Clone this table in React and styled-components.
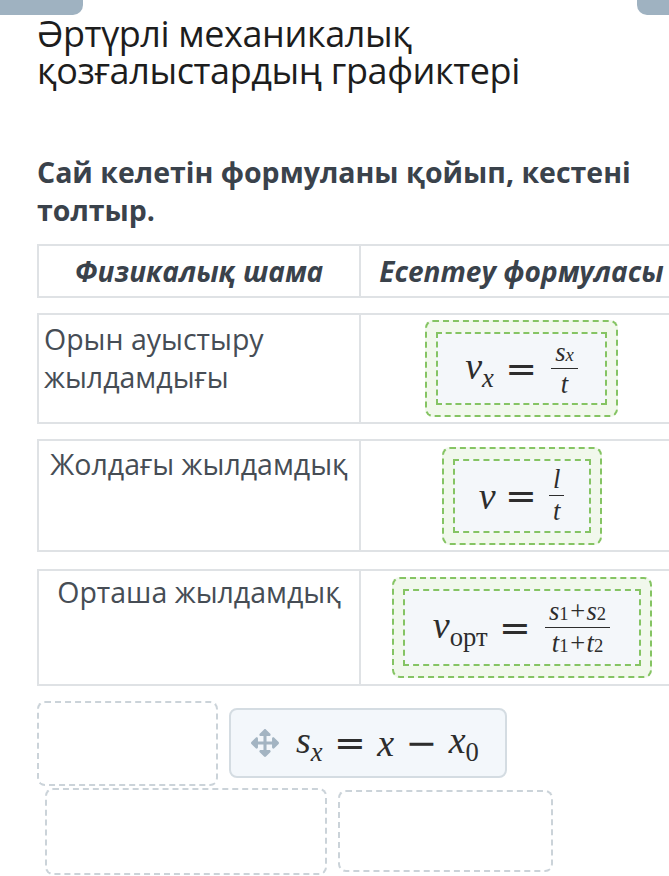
import React from "react";
import styled, { createGlobalStyle } from "styled-components";
import { FaArrowsAlt } from "react-icons/fa";

const GREEN = "#85c463";
const LINE = "#dfe2e5";
const SLATE = "#3a424b";

const GlobalStyle = createGlobalStyle`
  html, body {
    margin: 0;
    padding: 0;
    background: #fff;
    overflow-x: hidden;
  }
  body {
    font-family: "Open Sans", "Noto Sans", sans-serif;
  }
`;

const Page = styled.div`
  width: 669px;
  overflow: hidden;
`;

const TopBar = styled.div`
  display: flex;
  justify-content: space-between;
  height: 15px;
`;

const Tab = styled.div`
  width: ${p => p.w}px;
  height: 15px;
  background: #9fb2c1;
  border-bottom-left-radius: ${p => (p.left ? 10 : 0)}px;
  border-bottom-right-radius: ${p => (p.left ? 0 : 10)}px;
`;

const Content = styled.div`
  padding-left: 37px;
`;

const Title = styled.h1`
  margin: 0;
  font-size: 36px;
  font-weight: 400;
  line-height: 37px;
  letter-spacing: -0.4px;
  color: #1d1d1d;
`;

const Subtitle = styled.h2`
  margin: 64px 0 0;
  font-size: 28.5px;
  font-weight: 700;
  line-height: 38px;
  color: ${SLATE};
`;

const Table = styled.div`
  margin-top: 15px;
  width: 647px;
`;

const Row = styled.div`
  display: grid;
  grid-template-columns: 320px 1fr;
  box-sizing: border-box;
  height: ${p => p.h}px;
  margin-top: ${p => p.gap || 0}px;
  border: 2px solid ${LINE};
`;

const HeadCell = styled.div`
  display: flex;
  align-items: center;
  justify-content: center;
  white-space: nowrap;
  font-size: 28px;
  font-weight: 700;
  font-style: italic;
  color: ${SLATE};
  border-left: ${p => (p.divided ? `2px solid ${LINE}` : "none")};
`;

const TextCell = styled.div`
  padding: ${p => p.pt}px 5px 0;
  font-size: 28.5px;
  line-height: 38px;
  color: #464d55;
  text-align: ${p => p.align};
  white-space: ${p => (p.align === "center" ? "nowrap" : "normal")};
`;

const FormulaCell = styled.div`
  display: flex;
  align-items: center;
  justify-content: center;
  border-left: 2px solid ${LINE};
`;

const Zone = styled.div`
  padding: 10px 9px;
  border: 2px dashed ${GREEN};
  border-radius: 8px;
  background: #f1f8ec;
`;

const Slot = styled.div`
  display: flex;
  align-items: center;
  justify-content: center;
  box-sizing: border-box;
  width: ${p => p.w}px;
  height: ${p => p.h}px;
  border: 2px dashed ${GREEN};
  background: #f4f7fa;
`;

const MathText = styled.span`
  display: inline-flex;
  align-items: center;
  font-family: "Liberation Serif", "Times New Roman", serif;
  font-size: ${p => p.size || 38}px;
  color: #2d2d2d;
  white-space: nowrap;
`;

const Atom = styled.span`
  display: inline-block;
  font-style: italic;
`;

const Sub = styled.span`
  font-size: 0.7em;
  vertical-align: -0.3em;
  font-style: ${p => (p.upright ? "normal" : "italic")};
`;

const Op = styled.span`
  font-family: "DejaVu Serif", serif;
  font-style: normal;
  margin: 0 ${p => p.space || 0.3}em;
`;

const Frac = styled.span`
  display: inline-flex;
  flex-direction: column;
  align-items: center;
  font-size: 0.7em;
  margin-left: 0.1em;
`;

const FracPart = styled.span`
  display: flex;
  align-items: baseline;
  padding: 0 0.15em;
  line-height: 1.15;
  font-style: italic;
`;

const Bar = styled.span`
  align-self: stretch;
  border-top: 1.5px solid currentColor;
`;

const Pool = styled.div`
  display: flex;
  flex-wrap: wrap;
  align-items: flex-start;
  width: 632px;
  margin-top: 15px;
`;

const Gap = styled.div`
  box-sizing: border-box;
  width: ${p => p.w}px;
  height: ${p => p.h}px;
  margin-left: ${p => p.ml || 0}px;
  margin-top: ${p => p.mt || 0}px;
  border: 2px dashed #cbd3d9;
  border-radius: 8px;
`;

const Card = styled.div`
  display: flex;
  align-items: center;
  gap: 17px;
  box-sizing: border-box;
  width: 278px;
  height: 70px;
  margin: 7px 0 0 11px;
  padding-left: 20px;
  background: #f3f7fb;
  border: 2px solid #d4dce2;
  border-radius: 8px;
  color: #a3b4c2;
`;

const V = ({ children, sub, upright }) => (
  <Atom>
    {children}
    {sub && <Sub upright={upright}>{sub}</Sub>}
  </Atom>
);

const rows = [
  {
    label: "Орын ауыстыру жылдамдығы",
    align: "left",
    pt: 5,
    h: 111,
    gap: 15,
    slot: { w: 171, h: 73 },
    formula: (
      <MathText>
        <V sub="x">v</V>
        <Op>=</Op>
        <Frac>
          <FracPart>
            s<Sub>x</Sub>
          </FracPart>
          <Bar />
          <FracPart>t</FracPart>
        </Frac>
      </MathText>
    ),
  },
  {
    label: "Жолдағы жылдамдық",
    align: "center",
    pt: 4,
    h: 113,
    gap: 15,
    slot: { w: 138, h: 74 },
    formula: (
      <MathText>
        <V>v</V>
        <Op space={0.25}>=</Op>
        <Frac>
          <FracPart>l</FracPart>
          <Bar />
          <FracPart>t</FracPart>
        </Frac>
      </MathText>
    ),
  },
  {
    label: "Орташа жылдамдық",
    align: "center",
    pt: 2,
    h: 117,
    gap: 17,
    slot: { w: 238, h: 77 },
    formula: (
      <MathText>
        <V sub="орт" upright>
          v
        </V>
        <Op>=</Op>
        <Frac>
          <FracPart>
            s<Sub upright>1</Sub>+s<Sub upright>2</Sub>
          </FracPart>
          <Bar />
          <FracPart>
            t<Sub upright>1</Sub>+t<Sub upright>2</Sub>
          </FracPart>
        </Frac>
      </MathText>
    ),
  },
];

const App = () => (
  <Page>
    <GlobalStyle />
    <TopBar>
      <Tab w={83} />
      <Tab w={32} left />
    </TopBar>
    <Content>
      <Title>
        Әртүрлі механикалық
        <br />
        қозғалыстардың графиктері
      </Title>
      <Subtitle>Сай келетін формуланы қойып, кестені толтыр.</Subtitle>
      <Table>
        <Row h={54}>
          <HeadCell>Физикалық шама</HeadCell>
          <HeadCell divided>Есептеу формуласы</HeadCell>
        </Row>
        {rows.map((row, idx) => (
          <Row key={idx} h={row.h} gap={row.gap}>
            <TextCell align={row.align} pt={row.pt}>
              {row.label}
            </TextCell>
            <FormulaCell>
              <Zone>
                <Slot w={row.slot.w} h={row.slot.h}>
                  {row.formula}
                </Slot>
              </Zone>
            </FormulaCell>
          </Row>
        ))}
      </Table>
      <Pool>
        <Gap w={181} h={85} />
        <Card>
          <FaArrowsAlt size={28} />
          <MathText>
            <V sub="x">s</V>
            <Op>=</Op>
            <V>x</V>
            <Op>−</Op>
            <V sub="0" upright>
              x
            </V>
          </MathText>
        </Card>
        <Gap w={282} h={87} ml={8} mt={2} />
        <Gap w={215} h={82} ml={11} mt={4} />
      </Pool>
    </Content>
  </Page>
);

export default App;
